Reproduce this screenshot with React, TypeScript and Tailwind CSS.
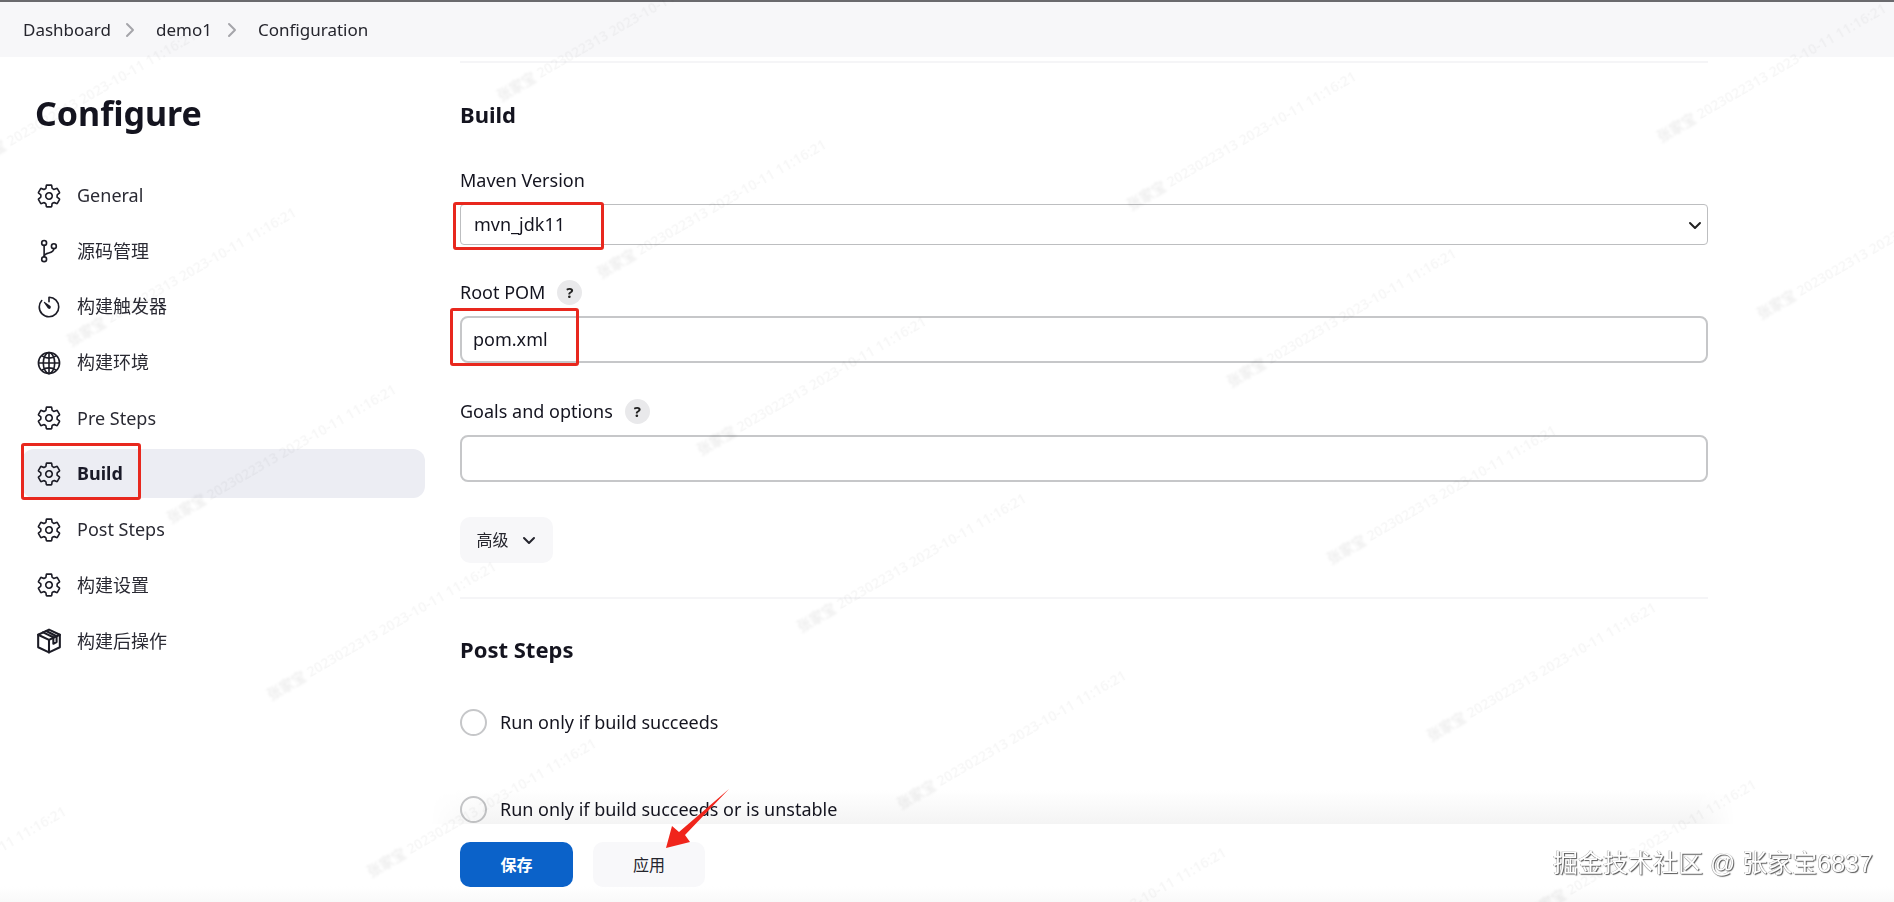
import React from "react";
import { IoSettingsOutline, IoGitBranchOutline, IoTimerOutline, IoGlobeOutline } from "react-icons/io5";

const FONT = "font-['Noto_Sans','Noto_Sans_CJK_SC',sans-serif]";

function PackageIcon({ className }: { className?: string }) {
  return (
    <svg viewBox="0 0 24 24" fill="none" stroke="currentColor" strokeWidth="1.9" strokeLinejoin="round" strokeLinecap="round" className={className}>
      <path d="M12 1.5 L22 6.2 V17.8 L12 22.5 L2 17.8 V6.2 Z" />
      <path d="M2 6.2 L12 11 L22 6.2 M12 11 V22.5" />
      <path d="M6.5 4 L16 8.5 V14.5 L19 13 V7.6 L9.5 2.8" />
    </svg>
  );
}

function Chevron({ className, d = "M3 6 L8 11 L13 6" }: { className?: string; d?: string }) {
  return (
    <svg viewBox="0 0 16 16" fill="none" stroke="currentColor" strokeWidth="2" strokeLinecap="round" strokeLinejoin="round" className={className}>
      <path d={d} />
    </svg>
  );
}

const items: { label: string; Icon: React.ComponentType<{ className?: string }>; active?: boolean }[] = [
  { label: "General", Icon: IoSettingsOutline },
  { label: "源码管理", Icon: IoGitBranchOutline },
  { label: "构建触发器", Icon: IoTimerOutline },
  { label: "构建环境", Icon: IoGlobeOutline },
  { label: "Pre Steps", Icon: IoSettingsOutline },
  { label: "Build", Icon: IoSettingsOutline, active: true },
  { label: "Post Steps", Icon: IoSettingsOutline },
  { label: "构建设置", Icon: IoSettingsOutline },
  { label: "构建后操作", Icon: PackageIcon },
];

function Help() {
  return (
    <span className="ml-[12px] flex h-[25px] w-[25px] items-center justify-center rounded-full bg-[#e9e9eb] text-[15px] font-bold text-[#222]">?</span>
  );
}

function Field({ label, help, value }: { label: string; help?: boolean; value?: string }) {
  return (
    <div>
      <div className="flex h-[25px] items-center text-[18px] text-[#14141f]">
        {label}
        {help && <Help />}
      </div>
      <div className="mt-[11px] flex h-[47px] items-center rounded-[8px] border-2 border-[#c6c7c9] bg-white pl-[11px] text-[18px] text-[#14141f]">
        {value}
      </div>
    </div>
  );
}

function Radio({ label }: { label: string }) {
  return (
    <div className="flex h-[28px] items-center gap-[13px] text-[18px] text-[#14141f]">
      <span className="h-[27px] w-[27px] rounded-full border-2 border-[#c6c7c9] bg-white" />
      {label}
    </div>
  );
}

function Marks() {
  const marks: { x: number; y: number }[] = [];
  for (let m = -3; m < 6; m++) {
    for (let k = -3; k < 9; k++) {
      const x = 90 + 100 * k + 430 * m;
      const y = 333 + 177 * k - 245 * m;
      const endX = x + 263;
      const endY = y - 150;
      if (endX > 20 && x < 1880 && endY < 890 && y > 20) marks.push({ x, y });
    }
  }
  return (
    <div className="pointer-events-none absolute inset-0 overflow-hidden">
      {marks.map((p, i) => (
        <span
          key={i}
          className="absolute origin-left whitespace-nowrap text-[14px] font-semibold text-[#000]/[0.035] blur-[0.6px]"
          style={{ left: p.x - 22, top: p.y - 2, transform: "rotate(-30deg)" }}
        >
          <span className="text-[#000]/[0.07] blur-[1.2px]">张家宝</span> 2023022313 2023-10-11 11:16:21
        </span>
      ))}
    </div>
  );
}

export default function App() {
  return (
    <div className={`relative flex h-[902px] w-[1894px] flex-col overflow-hidden bg-white ${FONT}`}>
      <header className="flex h-[57px] shrink-0 items-center border-t-2 border-[#6a6a6e] bg-[#f7f7f9] pl-[23px] text-[17px] text-[#25252d]">
        <span className="w-[100px]">Dashboard</span>
        <Chevron d="M5 2 L11 8 L5 14" className="mr-[18px] -ml-[1px] h-[16px] w-[16px] text-[#a5a5aa]" />
        <span className="w-[69px]">demo1</span>
        <Chevron d="M5 2 L11 8 L5 14" className="mr-[18px] -ml-[1px] h-[16px] w-[16px] text-[#a5a5aa]" />
        <span>Configuration</span>
      </header>

      <div className="flex min-h-0 flex-1">
        <aside className="w-[460px] shrink-0 pl-[22px]">
          <h1 className="mt-[33px] ml-[13px] h-[46px] text-[34px] leading-[46px] font-bold text-[#14141f]">Configure</h1>
          <nav className="mt-[35px] w-[403px]">
            {items.map(({ label, Icon, active }) => (
              <div
                key={label}
                className={`mb-[6.7px] flex h-[49px] items-center gap-[15px] rounded-[12px] pl-[14px] text-[18px] ${
                  active ? "bg-[#ecedf3] font-bold text-[#1a1a28]" : "text-[#2a2a33]"
                }`}
              >
                <Icon className="h-[26px] w-[26px] text-[#1c1c26]" />
                {label}
              </div>
            ))}
          </nav>
        </aside>

        <main className="w-[1248px] shrink-0">
          <div className="mt-[4px] h-[2px] bg-[#f5f5f7]" />
          <h2 className="mt-[37px] h-[28px] text-[22px] leading-[28px] font-bold text-[#14141f]">Build</h2>
          <div className="mt-[40px] flex h-[25px] items-center text-[18px] text-[#14141f]">Maven Version</div>
          <div className="mt-[11px] flex h-[41px] items-center justify-between rounded-[4px] border border-[#bdbec0] bg-white pr-[4px] pl-[13px] text-[18px] text-[#14141f]">
            mvn_jdk11
            <Chevron className="h-[16px] w-[16px] text-[#222]" />
          </div>
          <div className="mt-[35px]">
            <Field label="Root POM" help value="pom.xml" />
          </div>
          <div className="mt-[36px]">
            <Field label="Goals and options" help />
          </div>
          <button className="mt-[35px] flex h-[46px] w-[93px] items-center justify-center gap-[12px] rounded-[10px] bg-[#f7f7f9] text-[16px] text-[#25252d]">
            高级
            <Chevron className="h-[16px] w-[16px]" />
          </button>
          <div className="mt-[34px] h-[2px] bg-[#f5f5f7]" />
          <h2 className="mt-[36px] h-[28px] text-[22px] leading-[28px] font-bold text-[#14141f]">Post Steps</h2>
          <div className="mt-[45px]">
            <Radio label="Run only if build succeeds" />
          </div>
          <div className="mt-[59px]">
            <Radio label="Run only if build succeeds or is unstable" />
          </div>
        </main>
      </div>

      <div className="pointer-events-none absolute top-[790px] left-[430px] h-[34px] w-[1305px] bg-gradient-to-b from-white to-[#f4f4f4] mix-blend-multiply [mask-image:linear-gradient(to_right,transparent,black_4%,black_97%,transparent)]" />

      <footer className="relative flex h-[78px] shrink-0 items-start gap-[20px] bg-white bg-gradient-to-b from-white from-80% to-[#f9f9f9] pt-[18px] pl-[460px]">
        <button className="h-[45px] w-[113px] rounded-[10px] bg-[#0b62c9] text-[16px] font-bold text-white">保存</button>
        <button className="h-[45px] w-[112px] rounded-[10px] bg-[#f8f8fa] text-[16px] text-[#25252d]">应用</button>
      </footer>

      <Marks />

      {/* annotations */}
      <div className="pointer-events-none absolute top-[202px] left-[453px] h-[48px] w-[151px] rounded-[3px] border-[3px] border-[#e8281e]" />
      <div className="pointer-events-none absolute top-[308px] left-[450px] h-[58px] w-[129px] rounded-[3px] border-[3px] border-[#e8281e]" />
      <div className="pointer-events-none absolute top-[443px] left-[21px] h-[57px] w-[120px] rounded-[3px] border-[3px] border-[#e8281e]" />
      <svg className="pointer-events-none absolute top-[785px] left-[660px]" width="75" height="70" viewBox="0 0 75 70">
        <path d="M69 4 L25 50 L30 57 L6 63 L12 41 L19 47 Z" fill="#f0251c" />
      </svg>

      <div
        className="absolute top-[847px] left-[1553px] font-['Liberation_Sans','Noto_Sans_CJK_SC',sans-serif] text-[25px] leading-[32px] whitespace-nowrap text-white"
        style={{ textShadow: "1px 1px 1px #555, -0.5px -0.5px 0.5px #999" }}
      >
        掘金技术社区 @ 张家宝6837
      </div>
    </div>
  );
}
